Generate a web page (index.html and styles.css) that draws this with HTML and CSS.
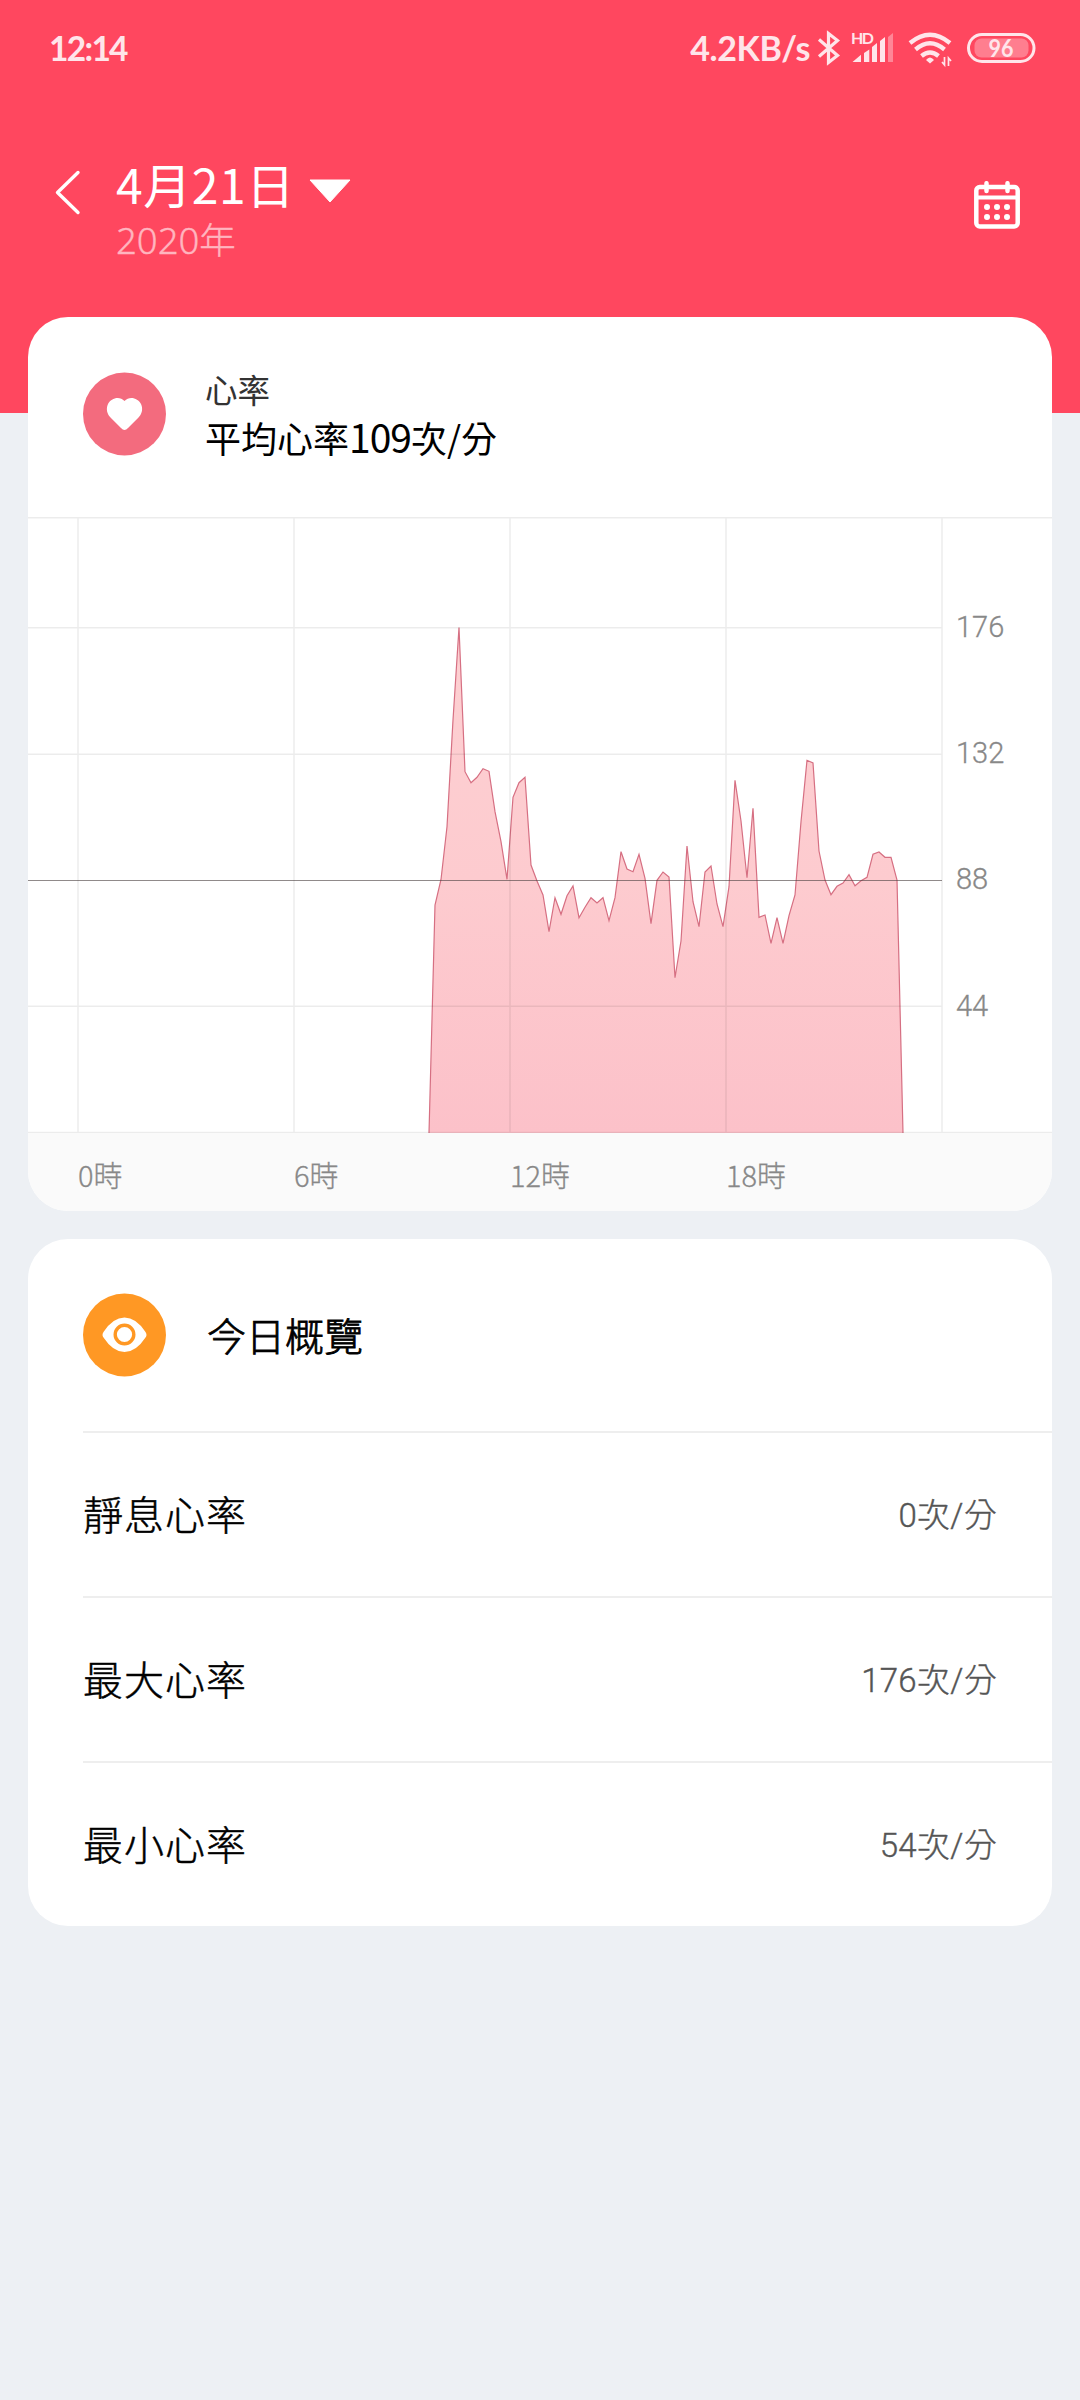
FILE: index.html
```html
<!DOCTYPE html>
<html lang="zh-Hant">
<head>
<meta charset="utf-8">
<title>心率</title>
<link rel="stylesheet" href="styles.css">
</head>
<body>
<header class="header">
  <div class="status">
    <span class="clock">12:14</span>
    <span class="speed">4.2KB/s</span>
    <svg class="status-icons" width="220" height="40" viewBox="816 28 220 40">
      <path d="M819 39.500L837.500 55.500L828.500 62.500V33.500L837.500 40.500L819 56.500" fill="none" stroke="currentColor" stroke-width="3.200"/>
      <text x="851" y="43.500" class="hd" textLength="23">HD</text>
      <path fill="currentColor" d="M852.500 62L861 54.700V62ZM864 53L869.300 49.500V62H864ZM872 47L877 43V62H872ZM880 41L885 37V62H880Z"/>
      <path fill="currentColor" opacity=".4" d="M888 37L893 33V62H888Z"/>
      <g fill="none" stroke="currentColor" stroke-width="4.300">
        <path d="M910 43Q930 26.500 950 43"/>
        <path d="M915.500 49.500Q930 37 944.500 49.500"/>
        <path d="M921.500 56Q930 49 938.500 56"/>
      </g>
      <path fill="currentColor" d="M926 60Q930 55 934 60L930 63.500Z"/>
      <path d="M944.500 57V65L942 62M948.500 66V58L951 61" fill="none" stroke="currentColor" stroke-width="1.700"/>
      <rect x="968.500" y="34.500" width="65.500" height="27" rx="13.500" fill="none" stroke="currentColor" stroke-width="3"/>
      <rect x="974.500" y="38.500" width="54" height="19" rx="7" fill="currentColor" opacity=".35"/>
      <text x="988.500" y="56.500" class="battery" textLength="25" lengthAdjust="spacingAndGlyphs">96</text>
    </svg>
  </div>
  <div class="toolbar">
    <svg class="back" width="30" height="46" viewBox="0 0 30 46"><path d="M25 3.500L4.500 23.500L25 43.500" fill="none" stroke="currentColor" stroke-width="3.400" stroke-linecap="round" stroke-linejoin="round"/></svg>
    <div class="date">
      <div class="day">4月21日<svg class="caret" width="42" height="24" viewBox="0 0 42 24"><path d="M1 1H41L21 23Z" fill="currentColor" stroke="currentColor" stroke-linejoin="round"/></svg></div>
      <div class="year">2020年</div>
    </div>
    <svg class="calendar" width="46" height="48" viewBox="0 0 46 48">
      <rect x="2.300" y="6" width="41.400" height="39.500" rx="3.500" fill="none" stroke="currentColor" stroke-width="4.500"/>
      <path d="M12.500 2.200V10M33.500 2.200V10" stroke="currentColor" stroke-width="4.500" stroke-linecap="round"/>
      <path d="M3 16.500H43" stroke="currentColor" stroke-width="4"/>
      <path d="M13 26h0M23 26h0M33 26h0M13 36h0M23 36h0M33 36h0" stroke="currentColor" stroke-width="6" stroke-linecap="round"/>
    </svg>
  </div>
</header>

<main class="cards">
  <section class="card">
    <div class="card-head rate-head">
      <svg class="badge" width="83" height="84" viewBox="0 0 83 84"><ellipse cx="41.500" cy="42" rx="41.500" ry="41.500" fill="#f36b7e"/><path d="M41.500 29C46.500 23.500 55 26 58 32C60.500 37.500 58.500 42.500 55.500 45.500L45 56Q41.500 60 38 56L27.500 45.500C24.500 42.500 22.500 37.500 25 32C28 26 36.500 23.500 41.500 29Z" fill="#fff"/></svg>
      <div>
        <div class="metric">心率</div>
        <div class="average">平均心率<span class="number">109</span>次/分</div>
      </div>
    </div>
    <svg class="chart" width="1024" height="616" viewBox="28 517 1024 616">
      <defs><linearGradient id="area" x1="0" y1="0" x2="0" y2="1"><stop offset="0" stop-color="#fdd0d2"/><stop offset=".5" stop-color="#fdcbcf"/><stop offset="1" stop-color="#fcc1c9"/></linearGradient></defs>
      <path fill="url(#area)" stroke="#d66f82" stroke-width="1.200" d="M429 1133L435 905L441 879.500L447 826.700L453 720L459 627.500L465 771.700L471 782.700L477 777.300L483 768.700L489 771.300L495 811.700L501 841.700L507 879.300L513 797.300L519 782.700L525 777.300L531 865L537 881L543 895L549 931.700L555 897.700L561 914.300L567 895.700L573 886L579 917.700L585 907.300L591 897.700L597 903L603 897.700L609 920.700L615 897.700L621 851.700L627 869L633 871.700L639 854.300L645 878.300L651 923.700L657 880.300L663 872L669 877L675 977.700L681 941L687 846L693 901.700L699 926.700L705 872L711 866L717 904L723 926.700L729 886.700L735 780.300L741 821L747 877.700L753 808.300L759 917.300L765 915L771 943.300L777 917.700L783 943.300L789 915.700L795 895L801 821.700L807 760.300L813 763L819 851L825 880L831 894.700L837 886.300L843 883L849 874.700L855 885.700L861 880.700L867 877.300L873 854.300L879 852L885 857.300L891 857.300L897 880L903 1133"/>
      <path class="grid" d="M28 517.750H1052M28 627.750H942M28 754.250H942M28 1006.250H942M28 1132.500H1052M78 517V1133M294 517V1133M510 517V1133M726 517V1133M942 517V1133"/>
      <path class="midline" d="M28 880.500H942"/>
      <g class="scale">
        <text x="956" y="636.500">176</text>
        <text x="956" y="762.500">132</text>
        <text x="956" y="889">88</text>
        <text x="956" y="1015.500">44</text>
      </g>
    </svg>
    <div class="hours"><span>0時</span><span>6時</span><span>12時</span><span>18時</span></div>
  </section>

  <section class="card">
    <div class="card-head overview-head">
      <svg class="badge" width="83" height="84" viewBox="0 0 83 84"><ellipse cx="41.500" cy="42" rx="41.500" ry="41.500" fill="#ff9824"/><path d="M20.500 39Q30 24.500 41.500 24.500T62.500 39Q64.500 42 62.500 44.500Q53 59 41.500 59T20.500 44.500Q18.500 42 20.500 39Z" fill="#fff"/><circle cx="41.500" cy="41.500" r="9.300" fill="none" stroke="#ff9824" stroke-width="3.400"/></svg>
      <h2 class="overview">今日概覽</h2>
    </div>
    <div class="row"><span class="label">靜息心率</span><span class="value">0次/分</span></div>
    <div class="row"><span class="label">最大心率</span><span class="value">176次/分</span></div>
    <div class="row"><span class="label">最小心率</span><span class="value">54次/分</span></div>
  </section>
</main>
</body>
</html>
```
FILE: styles.css
```css
* { box-sizing: border-box; }
svg { display: block; flex: none; }
body {
  margin: 0;
  min-height: 2400px;
  background: #edf0f4;
  color: #000;
  font-family: "Noto Sans CJK TC", sans-serif;
  font-weight: 300;
}
.header { height: 413px; background: #ff475f; color: #fff; }
.status {
  display: flex;
  align-items: center;
  height: 96px;
  padding: 0 44px 0 49px;
  color: #ffe5ea;
  font: 700 34px/40px Lato, sans-serif;
}
.clock { font-size: 33.500px; letter-spacing: -1.700px; }
.speed { margin-left: auto; margin-right: 6px; letter-spacing: -.4px; }
.hd { font: 700 16px Lato, sans-serif; fill: currentColor; }
.battery { font: 700 25px Lato, sans-serif; fill: currentColor; }
.toolbar {
  display: flex;
  align-items: flex-start;
  padding: 52px 60px 0 53px;
}
.back { margin-top: 21px; }
.date { margin-left: 33px; }
.day {
  display: flex;
  align-items: center;
  gap: 14px;
  font-size: 48px;
  line-height: 70px;
  letter-spacing: .6px;
  font-weight: 400;
}
.caret { margin-top: 15px; }
.year {
  font-family: "Noto Sans", "Noto Sans CJK TC", sans-serif;
  font-size: 36.500px;
  line-height: 44px;
  color: #ffb5bf;
  -webkit-text-stroke: .4px;
}
.calendar { margin-left: auto; margin-top: 32.500px; }
.cards {
  display: flex;
  flex-direction: column;
  gap: 28px;
  margin: -96px 28px 0;
}
.card { background: #fff; border-radius: 40px; overflow: hidden; }
.card-head { display: flex; align-items: center; padding-left: 55px; }
.rate-head { height: 200px; gap: 39px; padding-bottom: 7px; }
.metric { font-size: 32.500px; line-height: 46px; color: #333; font-weight: 400; }
.average { font-size: 36px; line-height: 50px; font-weight: 400; }
.number { font-size: 39px; line-height: 1; letter-spacing: -1px; }
.grid { fill: none; stroke: rgba(0, 0, 0, .075); stroke-width: 1.500; }
.midline { stroke: rgba(70, 60, 60, .6); stroke-width: 1; }
.scale { font: 300 29px Roboto, sans-serif; fill: #888; stroke: #888; stroke-width: .3px; }
.hours {
  display: grid;
  grid-template-columns: repeat(4, 216px);
  height: 78px;
  padding-left: 50px;
  background: #fafafa;
  color: #888;
  font-size: 29px;
  line-height: 83px;
  -webkit-text-stroke: .3px;
}
.overview-head { height: 192px; gap: 41px; }
.overview {
  margin: -3px 0 0;
  font-size: 39px;
  line-height: 56px;
  font-weight: 300;
  -webkit-text-stroke: .8px;
}
.row {
  display: flex;
  align-items: center;
  justify-content: space-between;
  height: 165px;
  margin-left: 55px;
  padding: 0 55px 4px 0;
  border-top: 2px solid #eee;
}
.label { font-size: 40px; letter-spacing: 1px; -webkit-text-stroke: .5px; }
.value {
  color: #555;
  font-family: Roboto, "Noto Sans CJK TC", sans-serif;
  font-size: 33px;
  letter-spacing: .3px;
  -webkit-text-stroke: .4px;
}
```
